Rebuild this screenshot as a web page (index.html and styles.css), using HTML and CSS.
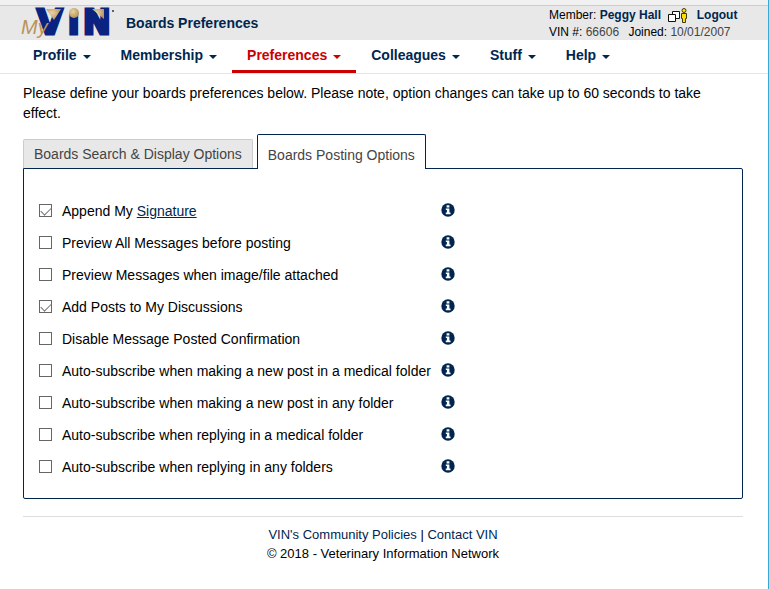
FILE: index.html
```html
<!DOCTYPE html>
<html lang="en">
<head>
<meta charset="utf-8">
<title>Boards Preferences</title>
<link rel="stylesheet" href="styles.css">
</head>
<body>
<svg class="defs" aria-hidden="true">
  <symbol id="info" viewBox="0 0 14 14">
    <circle cx="7" cy="7" r="6.700" fill="#00264f"/>
    <path d="M5.600 2.300h2.800v2.200H5.600zM4.800 5.400h3.600v4.200h1.100v1.600H4.800V9.600h1.100V7H4.800z" fill="#fff"/>
  </symbol>
</svg>
<header class="topbar">
  <svg class="logo" viewBox="0 0 96 34" role="img" aria-label="MyVIN">
    <defs>
      <radialGradient id="ball" cx="40%" cy="35%" r="65%">
        <stop offset="0" stop-color="#ead3a4"/>
        <stop offset="1" stop-color="#b8935a"/>
      </radialGradient>
    </defs>
    <g class="logo-vin">
      <text x="17" y="28">V</text>
      <text x="48" y="28">ı</text>
      <text x="63" y="28">N</text>
    </g>
    <path d="M26 3h15l-7 11z" fill="url(#ball)"/>
    <circle cx="54" cy="7" r="5" fill="url(#ball)"/>
    <path d="M72 3h12v10z" fill="url(#ball)"/>
    <circle cx="93" cy="5" r="1" fill="#334"/>
    <text class="logo-my" x="1" y="28">My</text>
  </svg>
  <h1>Boards Preferences</h1>
  <div class="member">
    <div>Member: <a class="name" href="#">Peggy Hall</a>
      <svg class="person" viewBox="0 0 20 16" aria-hidden="true">
        <path d="M4.500 3.500h7v7h-7z" fill="#fff" stroke="#111"/>
        <path d="M.5 6.500h7v7h-7z" fill="#fff" stroke="#111"/>
        <path d="M13.500 5.500h5v5h-1v4h-3v-4h-1z" fill="#ffe000" stroke="#44390a"/>
        <circle cx="16" cy="2.500" r="2" fill="#ffe000" stroke="#44390a"/>
      </svg>
      <a class="name" href="#">Logout</a></div>
    <div>VIN #: <span class="value">66606</span> <span class="joined">Joined: <span class="value">10/01/2007</span></span></div>
  </div>
</header>
<nav class="menu">
  <a href="#">Profile</a>
  <a href="#">Membership</a>
  <a class="active" href="#">Preferences</a>
  <a href="#">Colleagues</a>
  <a href="#">Stuff</a>
  <a href="#">Help</a>
</nav>
<main>
  <p class="intro">Please define your boards preferences below. Please note, option changes can take up to 60 seconds to take effect.</p>
  <div class="tabs" role="tablist">
    <button class="tab" type="button" role="tab">Boards Search &amp; Display Options</button>
    <button class="tab selected" type="button" role="tab" aria-selected="true">Boards Posting Options</button>
  </div>
  <form class="panel">
    <div class="option"><input type="checkbox" id="o1" checked><label for="o1">Append My <a href="#">Signature</a></label><svg><use href="#info"/></svg></div>
    <div class="option"><input type="checkbox" id="o2"><label for="o2">Preview All Messages before posting</label><svg><use href="#info"/></svg></div>
    <div class="option"><input type="checkbox" id="o3"><label for="o3">Preview Messages when image/file attached</label><svg><use href="#info"/></svg></div>
    <div class="option"><input type="checkbox" id="o4" checked><label for="o4">Add Posts to My Discussions</label><svg><use href="#info"/></svg></div>
    <div class="option"><input type="checkbox" id="o5"><label for="o5">Disable Message Posted Confirmation</label><svg><use href="#info"/></svg></div>
    <div class="option"><input type="checkbox" id="o6"><label for="o6">Auto-subscribe when making a new post in a medical folder</label><svg><use href="#info"/></svg></div>
    <div class="option"><input type="checkbox" id="o7"><label for="o7">Auto-subscribe when making a new post in any folder</label><svg><use href="#info"/></svg></div>
    <div class="option"><input type="checkbox" id="o8"><label for="o8">Auto-subscribe when replying in a medical folder</label><svg><use href="#info"/></svg></div>
    <div class="option"><input type="checkbox" id="o9"><label for="o9">Auto-subscribe when replying in any folders</label><svg><use href="#info"/></svg></div>
  </form>
</main>
<footer>
  <div><a href="#">VIN's Community Policies</a> | <a href="#">Contact VIN</a></div>
  <div>© 2018 - Veterinary Information Network</div>
</footer>
</body>
</html>
```
FILE: styles.css
```css
* { box-sizing: border-box; }

body {
  margin: 0;
  min-height: 100vh;
  padding-top: 5px;
  border-right: 1px solid #36a9d6;
  background: linear-gradient(#f1f1f1 5px, #fff 5px);
  color: #000;
  font: 14px/20px "Liberation Sans", Arial, sans-serif;
}

a { color: #00264f; text-decoration: none; }

.defs { position: absolute; width: 0; height: 0; }

.topbar {
  display: flex;
  height: 35px;
  padding: 0 30px 0 20px;
  border-top: 1px solid #ccc;
  background: #e8e8e8;
}

.logo { width: 96px; height: 34px; flex: none; overflow: visible; }

.logo-vin text {
  font: bold 33px "DejaVu Sans", sans-serif;
  fill: #0b2380;
  stroke: #0b2380;
  stroke-width: 3px;
}

.logo-my {
  font: italic 20px "Liberation Sans", Arial, sans-serif;
  fill: #b8935a;
}

h1 {
  flex: 1;
  margin: 0 0 0 10px;
  color: #00264f;
  font-size: 14px;
  line-height: 34px;
}

.member { width: 189px; padding-top: 1px; font-size: 12px; line-height: 17px; white-space: nowrap; }
.name { font-weight: bold; }
.person { width: 20px; height: 16px; margin: 0 5px 0 4px; vertical-align: -5px; }
.member > div { height: 17px; }
.value { color: #444; }
.joined { margin-left: 6px; }

.menu {
  display: flex;
  height: 34px;
  padding-left: 18px;
  border-bottom: 1px solid #e5e5e5;
}

.menu a {
  display: flex;
  align-items: center;
  gap: 6px;
  padding: 0 15px;
  border-bottom: 3px solid transparent;
  font-weight: bold;
}

.menu a::after {
  content: "";
  margin-top: 3px;
  border: 4px solid transparent;
  border-top-color: currentColor;
  border-bottom: 0;
}

.menu .active { border-color: #c00; color: #c00; }

main { margin: 0 25px 0 23px; }

.intro { margin: 0; padding: 9px 20px 11px 0; }

.tabs { display: flex; align-items: flex-end; gap: 4px; }

.tab {
  height: 29px;
  padding: 0 10px;
  border: 1px solid #ccc;
  border-bottom: 0;
  border-radius: 2px 2px 0 0;
  background: #e8e8e8;
  color: #444;
  font: inherit;
}

.selected {
  position: relative;
  height: 35px;
  margin-bottom: -1px;
  padding-top: 5px;
  border-color: #00264f;
  background: #fff;
}

.panel {
  padding: 26px 15px 15px;
  border: 1px solid #00264f;
  border-radius: 0 2px 2px 2px;
}

.option {
  display: grid;
  grid-template-columns: 13px 369px 14px;
  column-gap: 10px;
  align-items: center;
  height: 32px;
}

.option label { white-space: nowrap; }
.option label a { text-decoration: underline; }
.option svg { width: 14px; height: 14px; margin-bottom: 2px; }

.option input {
  display: grid;
  place-content: start center;
  appearance: none;
  width: 13px;
  height: 13px;
  margin: 0 0 2px;
  padding-top: 2px;
  border: 1px solid #666;
  background: #fff;
}

.option input:checked::after {
  content: "";
  width: 9px;
  height: 5px;
  border: solid #777;
  border-width: 0 0 1px 1px;
  transform: rotate(-45deg);
}

footer {
  margin: 17px 25px 0 23px;
  padding-top: 8px;
  border-top: 1px solid #ddd;
  font-size: 13px;
  line-height: 19px;
  text-align: center;
}
```
